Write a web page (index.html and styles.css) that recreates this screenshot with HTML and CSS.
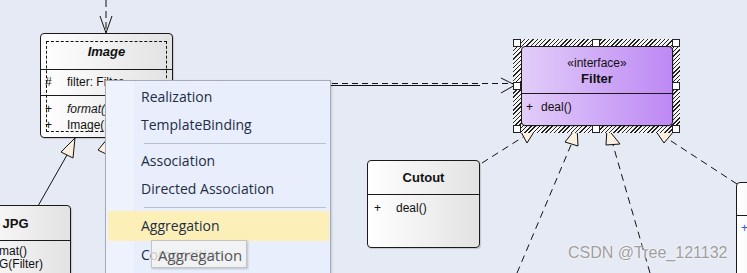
FILE: index.html
```html
<!DOCTYPE html>
<html lang="en">
<head>
    <meta charset="UTF-8">
    <title>Class Diagram - Filter</title>
    <link rel="stylesheet" href="styles.css">
</head>
<body>

<div class="canvas">

    <!-- connectors -->
    <svg class="wires" width="747" height="273" viewBox="0 0 747 273">
        <g stroke="#111" stroke-width="1" fill="none">
            <line x1="106" y1="0" x2="106" y2="33" stroke-dasharray="7 4"/>
            <polyline points="100,16 106,33 112,16"/>

            <line x1="172" y1="83.5" x2="514" y2="83.5" stroke-dasharray="6 4"/>
            <line x1="172" y1="85.5" x2="480" y2="85.5"/>
            <polyline points="501,78 515,85 501,93"/>

            <line x1="38" y1="206" x2="67" y2="155"/>

            <line x1="482" y1="163" x2="523" y2="137" stroke-dasharray="7 5"/>
            <line x1="517" y1="273" x2="571" y2="145" stroke-dasharray="7 5"/>
            <line x1="650" y1="273" x2="613" y2="145" stroke-dasharray="7 5"/>
            <line x1="737" y1="184" x2="668" y2="139" stroke-dasharray="7 5"/>
        </g>
        <g stroke="#111" stroke-width="1" fill="#fbefdf">
            <polygon points="75,138 61,152 73,158"/>
            <polygon points="108,138 98,150 110,156"/>
            <polygon points="537,127 520,130 527,143"/>
            <polygon points="577,127 565,142 578,146"/>
            <polygon points="607,128 606,145 620,144"/>
            <polygon points="653,127 674,131 664,143"/>
        </g>
    </svg>

    <!-- Image -->
    <div class="cls cls-image">
        <div class="cls-head head-image"><span class="cls-name italic">Image</span></div>
        <div class="cls-part part-attr">
            <div class="row"><span class="vis">#</span><span>filter: Filter</span></div>
        </div>
        <div class="cls-part part-ops">
            <div class="row"><span class="vis">+</span><i>format()</i></div>
            <div class="row"><span class="vis">+</span><span>Image(Filter)</span></div>
        </div>
        <div class="sel-dash"></div>
    </div>

    <!-- JPG -->
    <div class="cls cls-jpg">
        <div class="cls-head head-jpg"><span class="cls-name">JPG</span></div>
        <div class="cls-part">
            <div class="row"><span class="vis">+</span><span>format()</span></div>
            <div class="row"><span class="vis">+</span><span>JPG(Filter)</span></div>
        </div>
    </div>

    <!-- Filter (selected) -->
    <div class="selection">
        <div class="cls cls-filter">
            <div class="cls-head head-filter">
                <span class="stereo">«interface»</span>
                <span class="cls-name">Filter</span>
            </div>
            <div class="cls-part">
                <div class="row"><span class="vis vis-sm">+</span><span>deal()</span></div>
            </div>
        </div>
        <span class="handle h-tl"></span>
        <span class="handle h-tm"></span>
        <span class="handle h-tr"></span>
        <span class="handle h-ml"></span>
        <span class="handle h-mr"></span>
        <span class="handle h-bl"></span>
        <span class="handle h-bm"></span>
        <span class="handle h-br"></span>
    </div>

    <!-- Cutout -->
    <div class="cls cls-cutout">
        <div class="cls-head head-cutout"><span class="cls-name">Cutout</span></div>
        <div class="cls-part">
            <div class="row"><span class="vis">+</span><span>deal()</span></div>
        </div>
    </div>

    <!-- right edge class, cut off -->
    <div class="cls cls-edge">
        <div class="cls-head head-edge"></div>
        <div class="cls-part">
            <div class="row"><span class="vis vis-blue">+</span></div>
        </div>
    </div>

    <div class="watermark">CSDN @Tree_121132</div>

    <!-- context menu -->
    <div class="menu">
        <div class="menu-item">Realization</div>
        <div class="menu-item">TemplateBinding</div>
        <div class="menu-sep"></div>
        <div class="menu-item">Association</div>
        <div class="menu-item">Directed Association</div>
        <div class="menu-sep"></div>
        <div class="menu-item active">Aggregation</div>
        <div class="menu-item">Composition</div>
        <div class="menu-sep"></div>
    </div>

    <div class="tooltip">Aggregation</div>

</div>

</body>
</html>
```

FILE: styles.css
```css
/* General */
* {
    box-sizing: border-box;
}

body {
    margin: 0;
    background: #e6eaf4;
    font-family: 'Liberation Sans', Arial, sans-serif;
    font-size: 12px;
    color: #111;
}

.canvas {
    position: relative;
    width: 747px;
    height: 273px;
    overflow: hidden;
    background: #e6eaf4;
}

.wires {
    position: absolute;
    left: 0;
    top: 0;
}

/* UML class boxes */
.cls {
    position: absolute;
    display: flex;
    flex-direction: column;
    border: 1px solid #1a1a1a;
    border-radius: 4px;
    background: linear-gradient(to right, #ffffff, #e2e2e2);
    box-shadow: 1px 1px 1px rgba(0, 0, 0, 0.15);
}

.cls-head {
    display: flex;
    flex-direction: column;
    align-items: center;
    justify-content: center;
    border-bottom: 1px solid #1a1a1a;
}

.cls-name {
    font-weight: bold;
    font-size: 13px;
}

.italic {
    font-style: italic;
}

.stereo {
    font-size: 12px;
    line-height: 15px;
}

.cls-part {
    padding: 4px 0 0 4px;
}

.cls-part + .cls-part {
    border-top: 1px solid #1a1a1a;
}

.row {
    display: flex;
    line-height: 16px;
    white-space: nowrap;
}

.vis {
    width: 22px;
}

.vis-sm {
    width: 15px;
}

.vis-blue {
    color: #2a5bd0;
}

.cls-image {
    left: 40px;
    top: 33px;
    width: 133px;
    height: 105px;
}

.head-image {
    height: 35px;
    border-bottom: none;
}

.part-attr {
    height: 26px;
    padding-top: 4px;
    border-top: 1px solid #1a1a1a;
}

.part-ops {
    padding-top: 5px;
}

.sel-dash {
    position: absolute;
    left: 5px;
    top: 7px;
    right: 5px;
    bottom: 5px;
    border: 1px dashed #111;
}

.cls-jpg {
    left: -40px;
    top: 205px;
    width: 111px;
    height: 90px;
}

.head-jpg {
    height: 35px;
}

.cls-jpg .cls-part {
    padding-left: 2px;
    padding-top: 4px;
}

.cls-jpg .row {
    line-height: 13px;
}

.cls-cutout {
    left: 367px;
    top: 160px;
    width: 113px;
    height: 88px;
}

.head-cutout {
    height: 34px;
}

.cls-cutout .cls-part {
    padding-left: 6px;
    padding-top: 5px;
}

.cls-edge {
    left: 736px;
    top: 182px;
    width: 60px;
    height: 120px;
}

.head-edge {
    height: 33px;
}

/* selected interface */
.selection {
    position: absolute;
    left: 513px;
    top: 39px;
    width: 167px;
    height: 94px;
    background: repeating-linear-gradient(135deg, #f4f4f4 0, #f4f4f4 2px, #222 2px, #222 3px);
}

.cls-filter {
    left: 8px;
    top: 7px;
    width: 152px;
    height: 80px;
    background: linear-gradient(to right, #e2cdf9, #bd88f4);
}

.head-filter {
    height: 47px;
    padding-top: 2px;
}

.head-filter .cls-name {
    line-height: 16px;
}

.cls-filter .cls-part {
    padding-top: 5px;
}

.handle {
    position: absolute;
    width: 8px;
    height: 8px;
    background: #fff;
    border: 1px solid #222;
}

.h-tl { left: 0; top: 0; }
.h-tm { left: 79px; top: 0; }
.h-tr { right: 0; top: 0; }
.h-ml { left: 0; top: 43px; }
.h-mr { right: 0; top: 43px; }
.h-bl { left: 0; bottom: 0; }
.h-bm { left: 79px; bottom: 0; }
.h-br { right: 0; bottom: 0; }

.watermark {
    position: absolute;
    left: 568px;
    top: 244px;
    font-size: 16px;
    color: #9c9c9c;
    text-shadow: 0 0 2px #fff, 0 0 1px #fff;
}

/* context menu */
.menu {
    position: absolute;
    left: 105px;
    top: 80px;
    width: 226px;
    height: 210px;
    padding: 2px 1px 0 2px;
    border: 1px solid #a3abbb;
    background: linear-gradient(to right, #eef2fc 0, #eef2fc 28px, #e8eefb 28px);
    box-shadow: 1px 1px 2px rgba(0, 0, 0, 0.15);
    font-family: 'Open Sans', 'Liberation Sans', sans-serif;
    font-size: 14px;
    color: #1f2d45;
}

.menu-item {
    height: 28px;
    line-height: 28px;
    padding-left: 33px;
}

.menu-item.active {
    background: #fcf0b8;
    height: 30px;
    line-height: 30px;
}

.menu-sep {
    height: 8px;
    margin: 0 3px 0 36px;
    background: linear-gradient(#b8c0cf, #b8c0cf) center / 100% 1px no-repeat;
}

.tooltip {
    position: absolute;
    left: 151px;
    top: 240px;
    width: 96px;
    height: 28px;
    padding-left: 6px;
    line-height: 28px;
    border: 1px solid #c4c4c4;
    background: rgba(242, 242, 242, 0.8);
    box-shadow: 1px 1px 2px rgba(0, 0, 0, 0.2);
    font-family: 'Open Sans', 'Liberation Sans', sans-serif;
    font-size: 15px;
    color: #555;
}
```
